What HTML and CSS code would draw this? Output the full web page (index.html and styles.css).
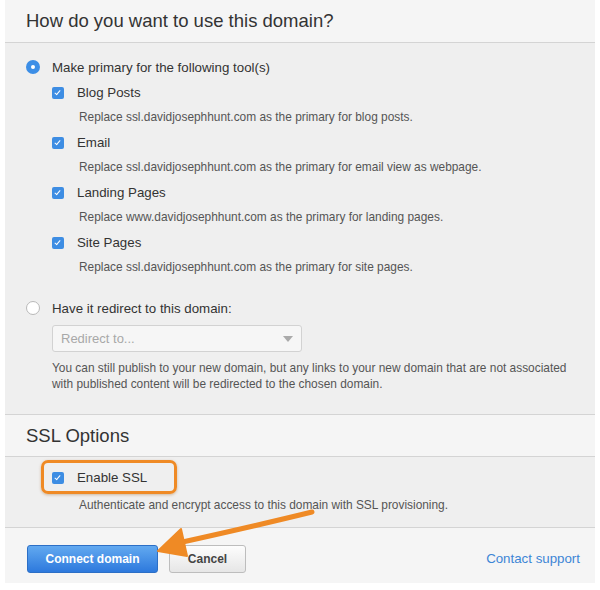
FILE: index.html
```html
<!DOCTYPE html>
<html>
<head>
<meta charset="utf-8">
<link rel="stylesheet" href="styles.css">
</head>
<body>
<div class="panel">
  <div class="section-head"><h2>How do you want to use this domain?</h2></div>
  <div class="section-body usage">
    <div class="option">
      <span class="radio on"></span>
      <span class="label">Make primary for the following tool(s)</span>
    </div>
    <div class="tools">
      <div class="tool">
        <div class="check-row"><span class="checkbox"></span><span class="label">Blog Posts</span></div>
        <div class="desc">Replace ssl.davidjosephhunt.com as the primary for blog posts.</div>
      </div>
      <div class="tool">
        <div class="check-row"><span class="checkbox"></span><span class="label">Email</span></div>
        <div class="desc">Replace ssl.davidjosephhunt.com as the primary for email view as webpage.</div>
      </div>
      <div class="tool">
        <div class="check-row"><span class="checkbox"></span><span class="label">Landing Pages</span></div>
        <div class="desc">Replace www.davidjosephhunt.com as the primary for landing pages.</div>
      </div>
      <div class="tool">
        <div class="check-row"><span class="checkbox"></span><span class="label">Site Pages</span></div>
        <div class="desc">Replace ssl.davidjosephhunt.com as the primary for site pages.</div>
      </div>
    </div>
    <div class="option second">
      <span class="radio"></span>
      <span class="label">Have it redirect to this domain:</span>
    </div>
    <div class="redirect">
      <div class="select"><span>Redirect to...</span><span class="caret"></span></div>
      <p class="note">You can still publish to your new domain, but any links to your new domain that are not associated with published content will be redirected to the chosen domain.</p>
    </div>
  </div>
  <div class="section-head ssl-head"><h2>SSL Options</h2></div>
  <div class="section-body ssl">
    <div class="check-row"><span class="checkbox"></span><span class="label">Enable SSL</span></div>
    <div class="desc">Authenticate and encrypt access to this domain with SSL provisioning.</div>
    <div class="highlight"></div>
  </div>
  <div class="footer">
    <button class="btn primary">Connect domain</button>
    <button class="btn secondary">Cancel</button>
    <a class="support" href="#">Contact support</a>
  </div>
  <svg class="arrow" width="600" height="590" viewBox="0 0 600 590">
    <path d="M312 512 Q 255 526 178 543" fill="none" stroke="#ef8a25" stroke-width="5" stroke-linecap="round"/>
    <path d="M158 551 L181 529 L187 556 Z" fill="#ef8a25" stroke="#ef8a25" stroke-width="2" stroke-linejoin="round"/>
  </svg>
</div>
</body>
</html>
```

FILE: styles.css
```css
html, body {
  margin: 0;
  padding: 0;
  background: #ffffff;
}

body {
  font-family: "Liberation Sans", Arial, sans-serif;
  color: #333;
}

.panel {
  position: relative;
  width: 590px;
  margin: 0 5px;
  background: #f5f5f5;
  height: 583px;
}

.section-head {
  height: 42px;
  display: flex;
  align-items: center;
  padding-left: 21px;
  background: #f5f5f5;
  border-bottom: 1px solid #d4d4d4;
}

.section-head h2 {
  margin: 0;
  font-weight: normal;
  font-size: 18.5px;
  color: #333;
}

.ssl-head {
  border-top: 1px solid #d4d4d4;
  height: 41px;
}

.section-body {
  background: #efefef;
}

.usage {
  padding: 14px 0 22px 21px;
}

.option {
  display: flex;
  align-items: center;
  height: 20px;
}

.option .label {
  margin-left: 12px;
  font-size: 13.3px;
}

.option.second {
  margin-top: 18px;
}

.radio {
  width: 14px;
  height: 14px;
  border-radius: 50%;
  box-sizing: border-box;
  border: 1px solid #b9b9b9;
  background: #fff;
  position: relative;
}

.radio.on {
  border: none;
  background: #3c8ee6;
}

.radio.on::after {
  content: "";
  position: absolute;
  left: 5px;
  top: 5px;
  width: 4px;
  height: 4px;
  border-radius: 50%;
  background: #fff;
}

.tools {
  margin-top: 3px;
  padding-left: 26px;
}

.check-row {
  display: flex;
  align-items: center;
  height: 25px;
}

.check-row .label {
  margin-left: 13px;
  font-size: 13.3px;
}

.checkbox {
  width: 12px;
  height: 12px;
  border-radius: 2px;
  background: #3d8de3;
  position: relative;
  flex: none;
}

.checkbox::after {
  content: "";
  position: absolute;
  left: 4px;
  top: 2px;
  width: 2px;
  height: 5px;
  border-right: 1.5px solid #fff;
  border-bottom: 1.5px solid #fff;
  transform: rotate(40deg);
}

.desc {
  height: 25px;
  line-height: 25px;
  padding-left: 27px;
  font-size: 11.9px;
  color: #555;
}

.redirect {
  padding-left: 26px;
}

.select {
  margin-top: 7px;
  width: 250px;
  height: 27px;
  box-sizing: border-box;
  border: 1px solid #d2d2d2;
  border-radius: 3px;
  background: #f6f6f6;
  display: flex;
  align-items: center;
  justify-content: space-between;
  padding: 0 8px 0 8px;
  font-size: 13px;
  color: #a8a8a8;
}

.caret {
  width: 0;
  height: 0;
  border-left: 5px solid transparent;
  border-right: 5px solid transparent;
  border-top: 6px solid #aaa;
}

.note {
  margin: 8px 0 0 0;
  font-size: 11.9px;
  line-height: 16px;
  color: #555;
  width: 530px;
}

.ssl {
  position: relative;
  padding: 8px 0 10px 47px;
  border-bottom: 1px solid #d4d4d4;
  height: 52px;
}

.ssl .desc {
  height: 30px;
  line-height: 30px;
}

.highlight {
  position: absolute;
  left: 36px;
  top: 3px;
  width: 130px;
  height: 28px;
  border: 3px solid #ef8a25;
  border-radius: 7px;
  box-shadow: 0 1px 3px rgba(150, 80, 0, 0.35);
}

.footer {
  display: flex;
  align-items: center;
  height: 55px;
  padding: 0 15px 0 22px;
  background: #f5f5f5;
}

.btn {
  height: 28px;
  font-family: "Liberation Sans", Arial, sans-serif;
  font-weight: bold;
  font-size: 12px;
  border-radius: 3px;
  padding: 0;
  margin-top: 7px;
}

.primary {
  width: 131px;
  color: #fff;
  background: linear-gradient(#62a9f0, #2d79dd);
  border: 1px solid #2c6fc6;
}

.secondary {
  width: 77px;
  margin-left: 11px;
  color: #444;
  background: linear-gradient(#fdfdfd, #e6e6e6);
  border: 1px solid #bdbdbd;
}

.support {
  margin-left: auto;
  margin-top: 6px;
  font-size: 13.3px;
  color: #3d86d6;
  text-decoration: none;
}

.arrow {
  position: absolute;
  left: -5px;
  top: 0;
  pointer-events: none;
}
```
